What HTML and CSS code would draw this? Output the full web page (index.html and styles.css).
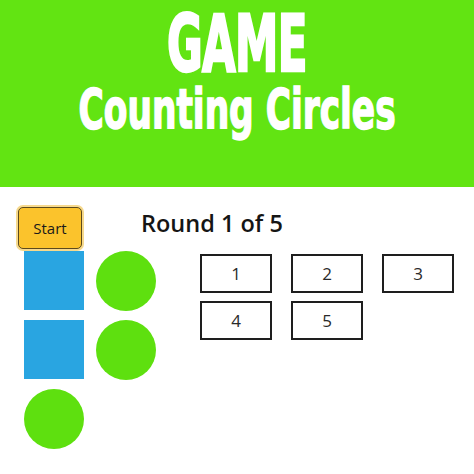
FILE: index.html
```html
<!DOCTYPE html>
<html>
<head>
<meta charset="utf-8">
<link rel="stylesheet" href="styles.css">
</head>
<body>
<header class="banner">
  <div class="title-game">GAME</div>
  <div class="title-sub">Counting Circles</div>
</header>
<main class="game">
  <div class="top-row">
    <button class="start-btn">Start</button>
    <h2 class="round">Round 1 of 5</h2>
  </div>
  <div class="play-row">
    <div class="shapes">
      <div class="square"></div>
      <div class="circle"></div>
      <div class="square"></div>
      <div class="circle"></div>
      <div class="circle"></div>
    </div>
    <div class="answers">
      <button class="answer">1</button>
      <button class="answer">2</button>
      <button class="answer">3</button>
      <button class="answer">4</button>
      <button class="answer">5</button>
    </div>
  </div>
</main>
</body>
</html>
```
FILE: styles.css
```css
* { box-sizing: border-box; }
html, body { margin: 0; padding: 0; background: #ffffff; }
body { width: 474px; height: 474px; overflow: hidden; font-family: "Open Sans", "Noto Sans", sans-serif; }

.banner {
  height: 187px;
  background: #62e412;
  display: flex;
  flex-direction: column;
  align-items: center;
  padding-top: 4px;
  color: #ffffff;
  font-family: "DejaVu Sans Condensed", "DejaVu Sans", sans-serif;
  font-weight: bold;
}
.title-game {
  font-size: 78px;
  line-height: 80px;
  transform: scaleX(0.62);
  -webkit-text-stroke: 2.5px #ffffff;
  letter-spacing: -1px;
}
.title-sub {
  font-size: 55px;
  line-height: 50px;
  transform: scaleX(0.695);
  -webkit-text-stroke: 1.5px #ffffff;
  margin-top: 0;
}

.game { padding: 20px 0 0 18px; }
.top-row { display: flex; align-items: center; }
.start-btn {
  width: 64px;
  height: 42px;
  background: #fbc32c;
  border: 1.5px solid #5b4a1e;
  border-radius: 5px;
  box-shadow: 0 0 0 2px #f6d98d;
  font-family: "Open Sans", "Noto Sans", sans-serif;
  font-size: 15px;
  color: #1a1a1a;
  padding: 0;
}
.round {
  margin: 0 0 0 59px;
  font-size: 23.5px;
  font-weight: 600;
  color: #151515;
  position: relative;
  top: -5px;
}

.play-row { display: flex; margin-top: 2px; }
.shapes {
  margin-left: 6px;
  display: grid;
  grid-template-columns: 60px 60px;
  column-gap: 12px;
  row-gap: 9px;
}
.square { width: 60px; height: 59px; background: #29a5e1; }
.circle { width: 60px; height: 60px; border-radius: 50%; background: #5ee00f; }

.answers {
  margin-left: 44px;
  margin-top: 3px;
  display: grid;
  grid-template-columns: repeat(3, 72px);
  grid-auto-rows: 39px;
  column-gap: 19px;
  row-gap: 8px;
  align-content: start;
}
.answer {
  background: #ffffff;
  border: 2px solid #1e1e1e;
  font-family: "Open Sans", "Noto Sans", sans-serif;
  font-size: 17px;
  color: #2a2a2a;
  padding: 0;
}
```
